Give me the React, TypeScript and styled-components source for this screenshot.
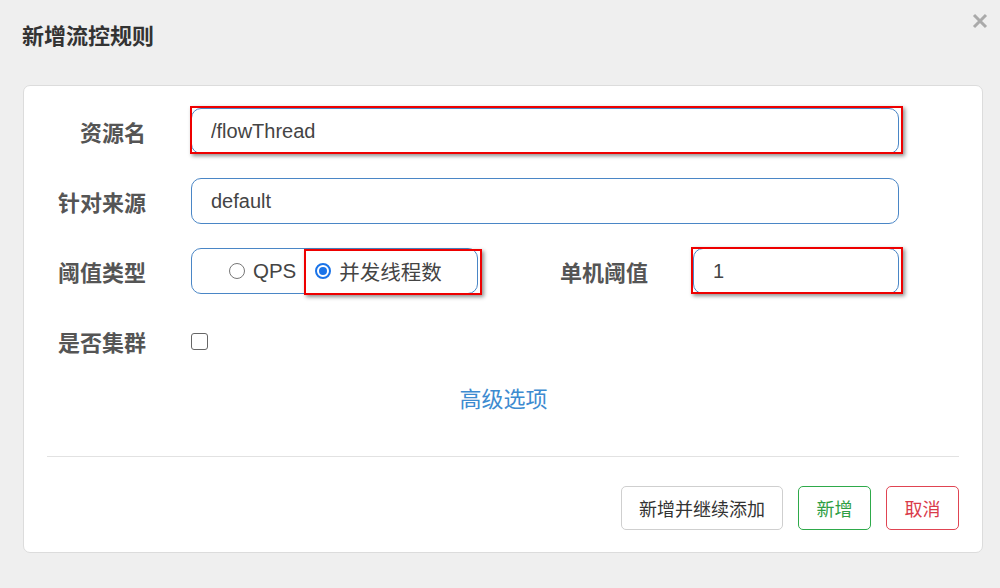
import React from "react";
import styled, { createGlobalStyle } from "styled-components";

const Global = createGlobalStyle`
  html, body { margin: 0; padding: 0; background: #efefef; }
  body { font-family: "Liberation Sans", "Noto Sans CJK SC", sans-serif; }
  * { box-sizing: border-box; }
`;

const Page = styled.div`
  width: 1000px;
  height: 588px;
  background: #efefef;
  overflow: hidden;
`;

const Header = styled.div`
  display: flex;
  justify-content: space-between;
  align-items: flex-start;
  padding: 22px 12px 0 22px;
`;

const Title = styled.h1`
  margin: 0;
  font-size: 22px;
  line-height: 30px;
  font-weight: bold;
  color: #333;
`;

const Close = styled.button`
  margin-top: -9px;
  width: 16px;
  height: 16px;
  border: none;
  background: none;
  padding: 0;
  display: flex;
`;

const Card = styled.div`
  margin: 33px 17px 0 23px;
  background: #fff;
  border: 1px solid #dcdcdc;
  border-radius: 7px;
  padding: 22px 23px 22px 0;
  display: flex;
  flex-direction: column;
`;

const Row = styled.div`
  display: flex;
  align-items: center;
  height: 46px;
  margin-bottom: 24px;
`;

const Label = styled.label<{ $w?: number }>`
  width: ${(p) => p.$w ?? 122}px;
  margin-right: 45px;
  text-align: right;
  font-size: 22px;
  font-weight: bold;
  color: #555;
  white-space: nowrap;
`;

const Field = styled.div<{ $w: number }>`
  position: relative;
  width: ${(p) => p.$w}px;
  height: 46px;
`;

const Input = styled.input`
  width: 100%;
  height: 100%;
  border: 1px solid #4a86c6;
  border-radius: 10px;
  padding: 0 19px;
  font-family: inherit;
  font-size: 20px;
  color: #444;
  outline: none;
  background: #fff;
`;

const Mark = styled.div<{ $t: number; $r: number; $b: number; $l: number }>`
  position: absolute;
  top: ${(p) => p.$t}px;
  right: ${(p) => p.$r}px;
  bottom: ${(p) => p.$b}px;
  left: ${(p) => p.$l}px;
  border: 2px solid #ee0000;
  box-shadow: 2px 2px 4px rgba(0, 0, 0, 0.45);
  pointer-events: none;
`;

const RadioGroup = styled.div`
  position: relative;
  width: 287px;
  height: 46px;
  border: 1px solid #4a86c6;
  border-radius: 10px;
  display: flex;
  align-items: center;
  padding-left: 37px;
  gap: 19px;
`;

const RadioItem = styled.label`
  display: flex;
  align-items: center;
  gap: 8px;
  font-size: 20.5px;
  color: #444;
`;

const RadioDot = styled.span<{ $on?: boolean }>`
  width: 16px;
  height: 16px;
  border-radius: 50%;
  border: ${(p) => (p.$on ? "2px solid #1a73e8" : "1.5px solid #777")};
  background: #fff;
  display: flex;
  align-items: center;
  justify-content: center;
  &::after {
    content: "";
    display: ${(p) => (p.$on ? "block" : "none")};
    width: 8px;
    height: 8px;
    border-radius: 50%;
    background: #1a73e8;
  }
`;

const Checkbox = styled.span`
  width: 17px;
  height: 17px;
  border: 1.5px solid #666;
  border-radius: 3px;
  background: #fff;
`;

const Advanced = styled.a`
  margin: 0 0 0 24px;
  text-align: center;
  font-size: 22px;
  line-height: 24px;
  color: #3d8bd0;
  text-decoration: none;
`;

const Divider = styled.hr`
  margin: 44px 0 0 23px;
  border: none;
  border-top: 1.5px solid #e2e2e2;
  height: 0;
`;

const Footer = styled.div`
  display: flex;
  justify-content: flex-end;
  gap: 15px;
  margin-top: 29px;
`;

const Btn = styled.button<{ $tone: "plain" | "ok" | "cancel"; $w: number }>`
  width: ${(p) => p.$w}px;
  height: 44px;
  background: #fff;
  border-radius: 5px;
  font-family: inherit;
  font-size: 18px;
  border: 1px solid
    ${(p) => (p.$tone === "ok" ? "#2eaa4a" : p.$tone === "cancel" ? "#e04452" : "#cfcfcf")};
  color: ${(p) => (p.$tone === "ok" ? "#2f9e44" : p.$tone === "cancel" ? "#d93b4a" : "#333")};
`;

export default function App() {
  return (
    <Page>
      <Global />
      <Header>
        <Title>新增流控规则</Title>
        <Close aria-label="close">
          <svg width="16" height="16" viewBox="0 0 16 16">
            <path d="M2 2 L14 14 M14 2 L2 14" stroke="#aaa" strokeWidth="3" />
          </svg>
        </Close>
      </Header>
      <Card>
        <Row>
          <Label>资源名</Label>
          <Field $w={708}>
            <Input defaultValue="/flowThread" />
            <Mark $t={-2} $r={-4} $b={0} $l={-1} />
          </Field>
        </Row>
        <Row>
          <Label>针对来源</Label>
          <Field $w={708}>
            <Input defaultValue="default" />
          </Field>
        </Row>
        <Row>
          <Label>阈值类型</Label>
          <RadioGroup>
            <RadioItem>
              <RadioDot />
              QPS
            </RadioItem>
            <RadioItem>
              <RadioDot $on />
              并发线程数
            </RadioItem>
            <Mark $t={0} $r={-5} $b={-2} $l={112} />
          </RadioGroup>
          <Label $w={170}>单机阈值</Label>
          <Field $w={206}>
            <Input defaultValue="1" />
            <Mark $t={-1} $r={-4} $b={0} $l={-2} />
          </Field>
        </Row>
        <Row>
          <Label>是否集群</Label>
          <Checkbox />
        </Row>
        <Advanced href="#">高级选项</Advanced>
        <Divider />
        <Footer>
          <Btn $tone="plain" $w={162}>新增并继续添加</Btn>
          <Btn $tone="ok" $w={73}>新增</Btn>
          <Btn $tone="cancel" $w={73}>取消</Btn>
        </Footer>
      </Card>
    </Page>
  );
}
